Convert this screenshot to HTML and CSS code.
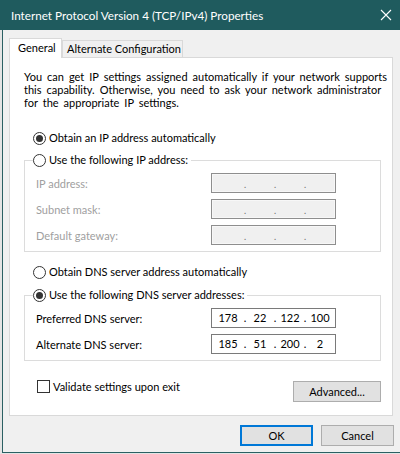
FILE: index.html
```html
<!DOCTYPE html>
<html>
<head>
<meta charset="utf-8">
<title>Internet Protocol Version 4 (TCP/IPv4) Properties</title>
<link rel="stylesheet" href="styles.css">
</head>
<body>
<div class="titlebar">
  <span class="title">Internet Protocol Version 4 (TCP/IPv4) Properties</span>
  <svg class="close" width="12" height="12" viewBox="0 0 12 12"><path d="M1 1 L11 11 M11 1 L1 11" stroke="#fff" stroke-width="1.1" fill="none"/></svg>
</div>
<div class="frame">
  <div class="tabs">
    <div class="tab active">General</div>
    <div class="tab">Alternate Configuration</div>
  </div>
  <div class="panel">
    <p class="desc">You can get IP settings assigned automatically if your network supports<br>this capability. Otherwise, you need to ask your network administrator<br>for the appropriate IP settings.</p>

    <div class="option first"><span class="radio checked"></span>Obtain an IP address automatically</div>

    <fieldset class="group">
      <legend><div class="option"><span class="radio"></span>Use the following IP address:</div></legend>
      <div class="row disabled">
        <span class="lbl">IP address:</span>
        <div class="ip"><span class="seg"></span><span class="dot">.</span><span class="seg"></span><span class="dot">.</span><span class="seg"></span><span class="dot">.</span><span class="seg"></span></div>
      </div>
      <div class="row disabled">
        <span class="lbl">Subnet mask:</span>
        <div class="ip"><span class="seg"></span><span class="dot">.</span><span class="seg"></span><span class="dot">.</span><span class="seg"></span><span class="dot">.</span><span class="seg"></span></div>
      </div>
      <div class="row disabled">
        <span class="lbl">Default gateway:</span>
        <div class="ip"><span class="seg"></span><span class="dot">.</span><span class="seg"></span><span class="dot">.</span><span class="seg"></span><span class="dot">.</span><span class="seg"></span></div>
      </div>
    </fieldset>

    <div class="option dns-auto"><span class="radio"></span>Obtain DNS server address automatically</div>

    <fieldset class="group dns">
      <legend><div class="option"><span class="radio checked"></span>Use the following DNS server addresses:</div></legend>
      <div class="row">
        <span class="lbl">Preferred DNS server:</span>
        <div class="ip"><span class="seg">178</span><span class="dot">.</span><span class="seg">22</span><span class="dot">.</span><span class="seg">122</span><span class="dot">.</span><span class="seg">100</span></div>
      </div>
      <div class="row">
        <span class="lbl">Alternate DNS server:</span>
        <div class="ip"><span class="seg">185</span><span class="dot">.</span><span class="seg">51</span><span class="dot">.</span><span class="seg">200</span><span class="dot">.</span><span class="seg">2</span></div>
      </div>
    </fieldset>

    <div class="bottom-row">
      <div class="check-opt"><span class="checkbox"></span>Validate settings upon exit</div>
      <button class="btn advanced">Advanced...</button>
    </div>
  </div>
  <div class="footer">
    <button class="btn ok">OK</button>
    <button class="btn">Cancel</button>
  </div>
</div>
</body>
</html>
```

FILE: styles.css
```css
* { box-sizing: border-box; }

body {
  margin: 0;
  width: 400px;
  height: 454px;
  overflow: hidden;
  background: #e4e4e4;
  font-family: Lato, "Noto Sans", sans-serif;
  font-size: 11px;
  color: #000;
}

.titlebar {
  height: 30px;
  background: #1f5b5e;
  color: #fff;
  display: flex;
  align-items: center;
  justify-content: space-between;
  padding: 0 8px 0 11px;
}

.title {
  font-size: 11.7px;
  line-height: 14px;
}

.close { display: block; }

.frame {
  margin-left: 2px;
  height: 423px;
  background: #f0f0f0;
  border-left: 1px solid #2b6063;
  border-bottom: 1px solid #2b6063;
  padding: 8px 0 0 6px;
}

.tabs {
  display: flex;
  align-items: flex-end;
  height: 19px;
}

.tab {
  height: 17px;
  line-height: 15px;
  border: 1px solid #d9d9d9;
  border-bottom: none;
  background: #f0f0f0;
  padding: 0 4px;
  width: 121px;
  white-space: nowrap;
}

.tab.active {
  position: relative;
  z-index: 1;
  height: 20px;
  margin-bottom: -1px;
  line-height: 18px;
  background: #fff;
  width: 53px;
  padding: 0 0 0 8px;
}

.panel {
  width: 384px;
  height: 359px;
  background: #fff;
  border: 1px solid #d9d9d9;
  padding: 12px 11px 0 14px;
}

.desc {
  margin: 0;
  line-height: 13px;
  white-space: nowrap;
  word-spacing: 2.2px;
}

.option {
  display: flex;
  align-items: center;
  height: 14px;
  line-height: 14px;
  padding-left: 9px;
  white-space: nowrap;
}

.option.first { margin-top: 22px; }

.radio {
  width: 13px;
  height: 13px;
  border: 1px solid #333;
  border-radius: 50%;
  margin-right: 3px;
  display: flex;
  align-items: center;
  justify-content: center;
  flex-shrink: 0;
  background: #fff;
}

.radio.checked::after {
  content: "";
  width: 7px;
  height: 7px;
  border-radius: 50%;
  background: #333;
}

.group {
  margin: 8px 0 0;
  padding: 0 11px 6px;
  border: 1px solid #dcdcdc;
  min-width: 0;
}

.group legend {
  padding: 0 3px 0 0;
  margin-left: -3px;
}

.group legend .option { padding-left: 0; }

.row {
  display: grid;
  grid-template-columns: 175px 125px;
  align-items: center;
  height: 20px;
  margin-top: 6px;
}

.lbl { white-space: nowrap; }

.disabled .lbl { color: #a0a0a0; }

.ip {
  height: 20px;
  border: 1px solid #7a7a7a;
  background: #fff;
  display: grid;
  grid-template-columns: 30px 4px 26px 4px 26px 4px 26px;
  align-items: center;
  padding-left: 1px;
  line-height: 16px;
}

.disabled .ip {
  background: #f0f0f0;
  border-color: #8e8e8e;
  box-shadow: inset 0 0 0 1px #f7f7f7;
}

.seg { text-align: center; }

.dot {
  text-align: center;
}

.disabled .dot {
  color: #6d6d6d;
  font-size: 9px;
  line-height: 16px;
  padding-top: 3px;
}

.dns-auto { margin-top: 13px; }

.group.dns { margin-top: 9px; }

.bottom-row {
  display: flex;
  justify-content: space-between;
  align-items: flex-start;
  margin-top: 18px;
}

.check-opt {
  display: flex;
  align-items: center;
  height: 14px;
  padding-left: 13px;
  white-space: nowrap;
}

.checkbox {
  width: 13px;
  height: 13px;
  border: 1px solid #333;
  background: #fff;
  margin-right: 3px;
}

.btn {
  font-family: inherit;
  font-size: 11px;
  color: #000;
  background: #e1e1e1;
  border: 1px solid #adadad;
  height: 21px;
  padding: 0;
  margin: 0;
  line-height: 17px;
}

.advanced {
  width: 88px;
  margin-top: 2px;
}

.footer {
  display: flex;
  justify-content: flex-end;
  gap: 8px;
  padding-right: 6px;
  margin-top: 9px;
}

.footer .btn { width: 73px; }

.btn.ok { border: 2px solid #0078d7; }
```
